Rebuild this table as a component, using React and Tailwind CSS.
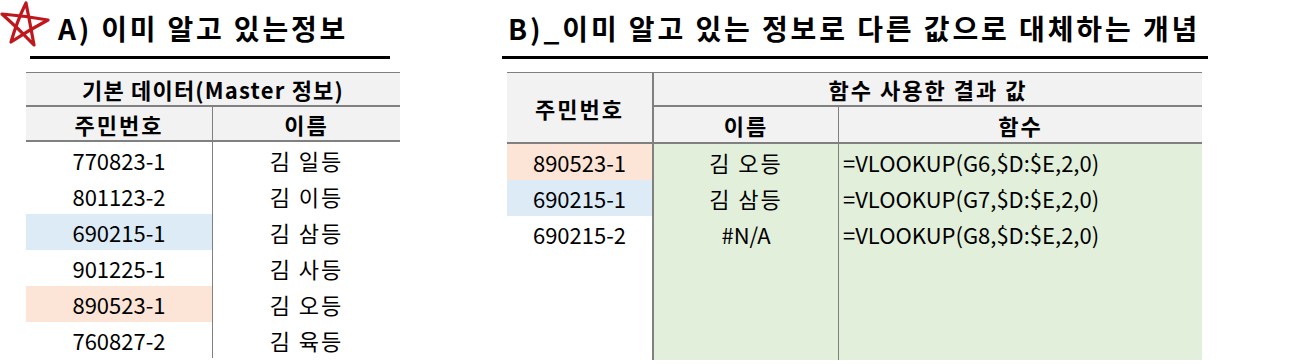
import React from 'react';

const FONT = { fontFamily: '"Noto Sans CJK KR", "Noto Sans", sans-serif' };

const masterRows = [
  { id: '770823-1', name: '김 일등', bg: '' },
  { id: '801123-2', name: '김 이등', bg: '' },
  { id: '690215-1', name: '김 삼등', bg: 'bg-[#ddebf7]' },
  { id: '901225-1', name: '김 사등', bg: '' },
  { id: '890523-1', name: '김 오등', bg: 'bg-[#fce4d6]' },
  { id: '760827-2', name: '김 육등', bg: '' },
];

const lookupRows = [
  { id: '890523-1', name: '김 오등', fn: '=VLOOKUP(G6,$D:$E,2,0)', bg: 'bg-[#fce4d6]' },
  { id: '690215-1', name: '김 삼등', fn: '=VLOOKUP(G7,$D:$E,2,0)', bg: 'bg-[#ddebf7]' },
  { id: '690215-2', name: '#N/A', fn: '=VLOOKUP(G8,$D:$E,2,0)', bg: '', latin: true },
  { id: '', name: '', fn: '', bg: '' },
  { id: '', name: '', fn: '', bg: '' },
  { id: '', name: '', fn: '', bg: '' },
];

function Star() {
  return (
    <svg width="50" height="46" viewBox="0 0 50 46" className="shrink-0">
      <path
        d="M26 2 Q30 22 34 44 Q18 27 2 13 Q26 15 48 19 Q29 29 11 41 Q17 20 26 2"
        fill="none"
        stroke="#c0171d"
        strokeWidth="3.2"
        strokeLinejoin="round"
        strokeLinecap="round"
      />
    </svg>
  );
}

export default function App() {
  return (
    <div className="w-[1294px] h-[364px] bg-white text-black overflow-hidden flex" style={FONT}>
      {/* A) master data */}
      <div className="w-[400px] shrink-0">
        <div className="h-[56px] flex items-start">
          <div className="pt-[1px]"><Star /></div>
          <div className="ml-[8px] mt-[14px] text-[28px] font-bold leading-none tracking-[2.8px] whitespace-nowrap">A) 이미 알고 있는정보</div>
        </div>
        <div className="ml-[30px] w-[360px] h-[3px] bg-black" />
        <div className="ml-[26px] mt-[13px] w-[374px] border-t border-[#808080] text-[22px] leading-none">
          <div className="h-[34px] bg-[#f2f2f2] border-b-2 border-[#808080] flex items-center justify-center font-bold tracking-[1.2px]">
            기본 데이터(Master 정보)
          </div>
          <div className="h-[35px] bg-[#f2f2f2] border-b-2 border-[#808080] flex font-bold tracking-[2px]">
            <div className="w-[187px] border-r border-[#808080] flex items-center justify-center">주민번호</div>
            <div className="flex-1 flex items-center justify-center">이름</div>
          </div>
          {masterRows.map((r) => (
            <div key={r.id} className="h-[36px] flex">
              <div className={`w-[187px] border-r border-[#808080] flex items-center justify-center ${r.bg}`}>{r.id}</div>
              <div className="flex-1 flex items-center justify-center tracking-[2px]">{r.name}</div>
            </div>
          ))}
        </div>
      </div>

      {/* B) lookup result */}
      <div className="ml-[102px] w-[706px] shrink-0">
        <div className="h-[56px] flex items-start">
          <div className="ml-[6px] mt-[14px] text-[28px] font-bold leading-none tracking-[2.9px] whitespace-nowrap">
            B)_이미 알고 있는 정보로 다른 값으로 대체하는 개념
          </div>
        </div>
        <div className="w-[706px] h-[3px] bg-black" />
        <div className="ml-[5px] mt-[13px] w-[695px] border-t border-[#808080] text-[22px] leading-none">
          <div className="flex bg-[#f2f2f2] border-b-2 border-[#808080] font-bold tracking-[2px]">
            <div className="w-[147px] border-r-2 border-[#808080] flex items-center justify-center">주민번호</div>
            <div className="flex-1">
              <div className="h-[34px] border-b-2 border-[#808080] flex items-center justify-center">함수 사용한 결과 값</div>
              <div className="h-[35px] flex">
                <div className="w-[185px] border-r border-[#808080] flex items-center justify-center">이름</div>
                <div className="flex-1 flex items-center justify-center">함수</div>
              </div>
            </div>
          </div>
          {lookupRows.map((r, i) => (
            <div key={i} className="h-[36px] flex">
              <div className={`w-[147px] border-r-2 border-[#808080] flex items-center justify-center ${r.bg}`}>{r.id}</div>
              <div className={`w-[185px] border-r border-[#808080] bg-[#e2efda] flex items-center justify-center ${r.latin ? '' : 'tracking-[2px]'}`}>{r.name}</div>
              <div className="flex-1 bg-[#e2efda] flex items-center pl-[4px] whitespace-nowrap">{r.fn}</div>
            </div>
          ))}
        </div>
      </div>
    </div>
  );
}
